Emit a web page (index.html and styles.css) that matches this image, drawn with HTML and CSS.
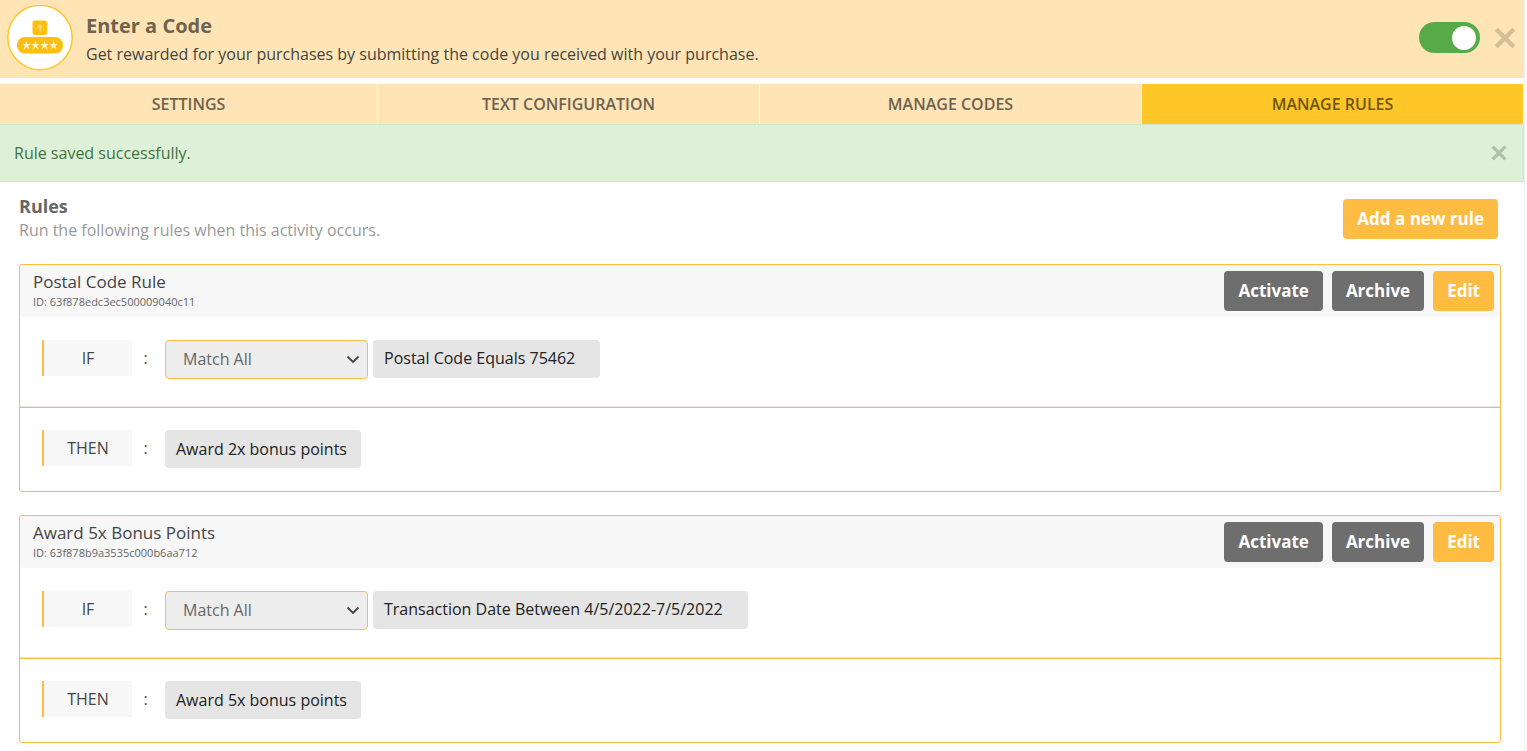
FILE: index.html
```html
<!DOCTYPE html>
<html lang="en">
<head>
  <meta charset="UTF-8">
  <meta name="viewport" content="width=device-width, initial-scale=1.0">
  <title>Enter a Code - Manage Rules</title>
  <link rel="stylesheet" href="styles.css">
</head>

<body>
  <main class="panel">
    <header class="activity">
      <svg class="activity-icon" viewBox="0 0 66 66" aria-hidden="true">
        <circle cx="33" cy="32.500" r="32.200" fill="#fff" stroke="#ffc627" stroke-width="1.500"/>
        <rect x="25.500" y="15.500" width="14.500" height="14.500" rx="2.500" fill="#ffbf0f"/>
        <path d="M33 26.500v-6.500M30.500 22.300l2.500-2.500 2.500 2.500" fill="none" stroke="#fff0c4" stroke-width="1"/>
        <rect x="10" y="32" width="46" height="16.500" rx="8" fill="#ffbf0f"/>
        <g fill="#fff3cf">
          <path id="star" d="M19.500 35.800l1 3.200 3.200-.1-2.500 2 1.300 3.500-3-2.200-3 2.200 1.300-3.500-2.500-2 3.200.1z"/>
          <use href="#star" x="9"/>
          <use href="#star" x="18"/>
          <use href="#star" x="27"/>
        </g>
      </svg>
      <div class="activity-text">
        <h1>Enter a Code</h1>
        <p>Get rewarded for your purchases by submitting the code you received with your purchase.</p>
      </div>
      <input class="switch" type="checkbox" role="switch" aria-label="Activity enabled" checked>
      <button class="close close-lg" type="button" aria-label="Close">
        <svg viewBox="0 0 20 20"><path d="M2 2l16 16M18 2L2 18"/></svg>
      </button>
    </header>

    <nav class="tabs">
      <a href="#settings">SETTINGS</a>
      <a href="#text">TEXT CONFIGURATION</a>
      <a href="#codes">MANAGE CODES</a>
      <a href="#rules" class="active">MANAGE RULES</a>
    </nav>

    <div class="alert" role="status">
      <span>Rule saved successfully.</span>
      <button class="close" type="button" aria-label="Dismiss">
        <svg viewBox="0 0 20 20"><path d="M2 2l16 16M18 2L2 18"/></svg>
      </button>
    </div>

    <section class="rules" id="rules">
      <div class="rules-head">
        <div>
          <h2>Rules</h2>
          <p>Run the following rules when this activity occurs.</p>
        </div>
        <button class="btn btn-primary" type="button">Add a new rule</button>
      </div>

      <article class="rule">
        <div class="rule-head">
          <div class="rule-name">
            <h3>Postal Code Rule</h3>
            <p>ID: 63f878edc3ec500009040c11</p>
          </div>
          <button class="btn" type="button">Activate</button>
          <button class="btn" type="button">Archive</button>
          <button class="btn btn-primary" type="button">Edit</button>
        </div>
        <div class="rule-row rule-if">
          <label class="keyword" for="match1">IF</label>
          <span class="colon">:</span>
          <div class="conditions">
            <select id="match1">
              <option>Match All</option>
              <option>Match Any</option>
            </select>
            <span class="chip chip-condition">Postal Code Equals 75462</span>
          </div>
        </div>
        <div class="rule-row">
          <span class="keyword">THEN</span>
          <span class="colon">:</span>
          <span class="chip">Award 2x bonus points</span>
        </div>
      </article>

      <article class="rule">
        <div class="rule-head">
          <div class="rule-name">
            <h3>Award 5x Bonus Points</h3>
            <p>ID: 63f878b9a3535c000b6aa712</p>
          </div>
          <button class="btn" type="button">Activate</button>
          <button class="btn" type="button">Archive</button>
          <button class="btn btn-primary" type="button">Edit</button>
        </div>
        <div class="rule-row rule-if">
          <label class="keyword" for="match2">IF</label>
          <span class="colon">:</span>
          <div class="conditions">
            <select id="match2">
              <option>Match All</option>
              <option>Match Any</option>
            </select>
            <span class="chip chip-condition">Transaction Date Between 4/5/2022-7/5/2022</span>
          </div>
        </div>
        <div class="rule-row">
          <span class="keyword">THEN</span>
          <span class="colon">:</span>
          <span class="chip">Award 5x bonus points</span>
        </div>
      </article>
    </section>
  </main>
</body>

</html>
```

FILE: styles.css
```css
*, *::before, *::after {
  box-sizing: border-box;
}

body {
  margin: 0;
  background: #fff;
  color: #444;
  font-family: "Open Sans", "Noto Sans", sans-serif;
  font-size: 16px;
  line-height: 22px;
}

h1, h2, h3, p {
  margin: 0;
}

button, select {
  font: inherit;
}

.panel {
  margin-right: 2px;
  border-right: 1px solid #eee;
  min-height: 100vh;
}

/* activity header */
.activity {
  display: flex;
  align-items: center;
  height: 78px;
  padding: 0 8px 3px 7px;
  background: #ffe4b5;
}

.activity-icon {
  width: 66px;
  height: 66px;
  flex: none;
}

.activity-text {
  flex: 1;
  margin-left: 13px;
  padding-top: 4px;
}

.activity-text h1 {
  font-size: 20px;
  line-height: 28px;
  color: #6e6250;
}

.activity-text p {
  line-height: 28px;
  color: #444;
}

.switch {
  appearance: none;
  display: flex;
  align-items: center;
  justify-content: flex-start;
  width: 61px;
  height: 31px;
  margin: 0 14px 0 0;
  padding: 4px;
  border-radius: 16px;
  background: #999;
  cursor: pointer;
}

.switch::before {
  content: "";
  width: 24px;
  height: 24px;
  border-radius: 50%;
  background: #fff;
}

.switch:checked {
  justify-content: flex-end;
  background: #57aa48;
}

.close {
  display: flex;
  padding: 0;
  border: 0;
  background: none;
  color: #000;
  opacity: 0.2;
  cursor: pointer;
}

.close svg {
  width: 16px;
  height: 16px;
  fill: none;
  stroke: currentColor;
  stroke-width: 4;
}

.close-lg {
  opacity: 0.16;
}

.close-lg svg {
  width: 22px;
  height: 22px;
}

/* tabs */
.tabs {
  display: grid;
  grid-template-columns: 377fr 381fr 381fr 381fr;
  gap: 1px;
  margin: 6px 1px 0 0;
}

.tabs a {
  padding: 9px 0;
  background: #ffe4b5;
  color: #6e6250;
  font-weight: 600;
  text-align: center;
  text-decoration: none;
}

.tabs a.active {
  background: #ffc627;
  color: #6e5511;
}

.alert {
  display: flex;
  align-items: center;
  justify-content: space-between;
  padding: 17px 16px 17px 14px;
  border: 1px solid #d0e9c6;
  border-left: 0;
  background: #dff0d8;
  color: #3c763d;
}

/* rules */
.rules {
  padding: 13px 23px 8px 19px;
}

.rules-head {
  display: flex;
  align-items: center;
  justify-content: space-between;
  margin-bottom: 22px;
  padding-right: 3px;
}

.rules-head h2 {
  font-size: 18px;
  line-height: 23px;
  color: #666;
}

.rules-head p {
  line-height: 24px;
  color: #999;
}

.btn {
  height: 40px;
  padding: 0 14px;
  border: 0;
  border-radius: 4px;
  background: #6e6e6e;
  color: #fff;
  font-size: 17px;
  font-weight: 700;
  cursor: pointer;
}

.btn-primary {
  background: #ffbc42;
}

.rule {
  border: 1px solid #ffbc42;
  border-radius: 3px;
}

.rule + .rule {
  margin-top: 23px;
}

.rule-head {
  display: flex;
  align-items: center;
  gap: 9px;
  height: 52px;
  padding: 0 6px 0 13px;
  border-radius: 3px;
  background: #f7f7f7;
}

.rule-name {
  flex: 1;
}

.rule-name h3 {
  font-size: 17px;
  font-weight: 400;
  line-height: 22px;
  color: #444;
}

.rule-name p {
  font-size: 11px;
  line-height: 18px;
  color: #666;
}

.rule-row {
  display: flex;
  align-items: flex-start;
  padding: 22px 22px 23px;
}

.rule-if {
  padding: 23px 22px 28px;
  border-bottom: 1px solid #ffbc42;
  box-shadow: inset 0 -1px #e5e5e5;
}

.keyword {
  width: 90px;
  padding: 7px 0;
  border-left: 2px solid #ffbc42;
  background: #f7f7f7;
  text-align: center;
}

.colon {
  width: 33px;
  padding: 7px 6px 7px 0;
  text-align: center;
}

.conditions {
  display: flex;
  align-items: flex-start;
  gap: 5px;
}

.conditions select {
  appearance: none;
  width: 203px;
  height: 39px;
  padding: 0 32px 1px 17px;
  border: 1px solid #ffbc42;
  border-radius: 4px;
  background: #ededed url("data:image/svg+xml,%3Csvg xmlns='http://www.w3.org/2000/svg' viewBox='0 0 14 9'%3E%3Cpath d='M1.500 1.500L7 7l5.500-5.500' fill='none' stroke='%23444' stroke-width='1.800'/%3E%3C/svg%3E") no-repeat right 7px center / 14px 9px;
  color: #666;
}

.chip {
  padding: 8px 14px 8px 11px;
  border-radius: 4px;
  background: #e5e5e5;
  color: #222;
}

.chip-condition {
  padding: 7px 25px 9px 11px;
}
```
